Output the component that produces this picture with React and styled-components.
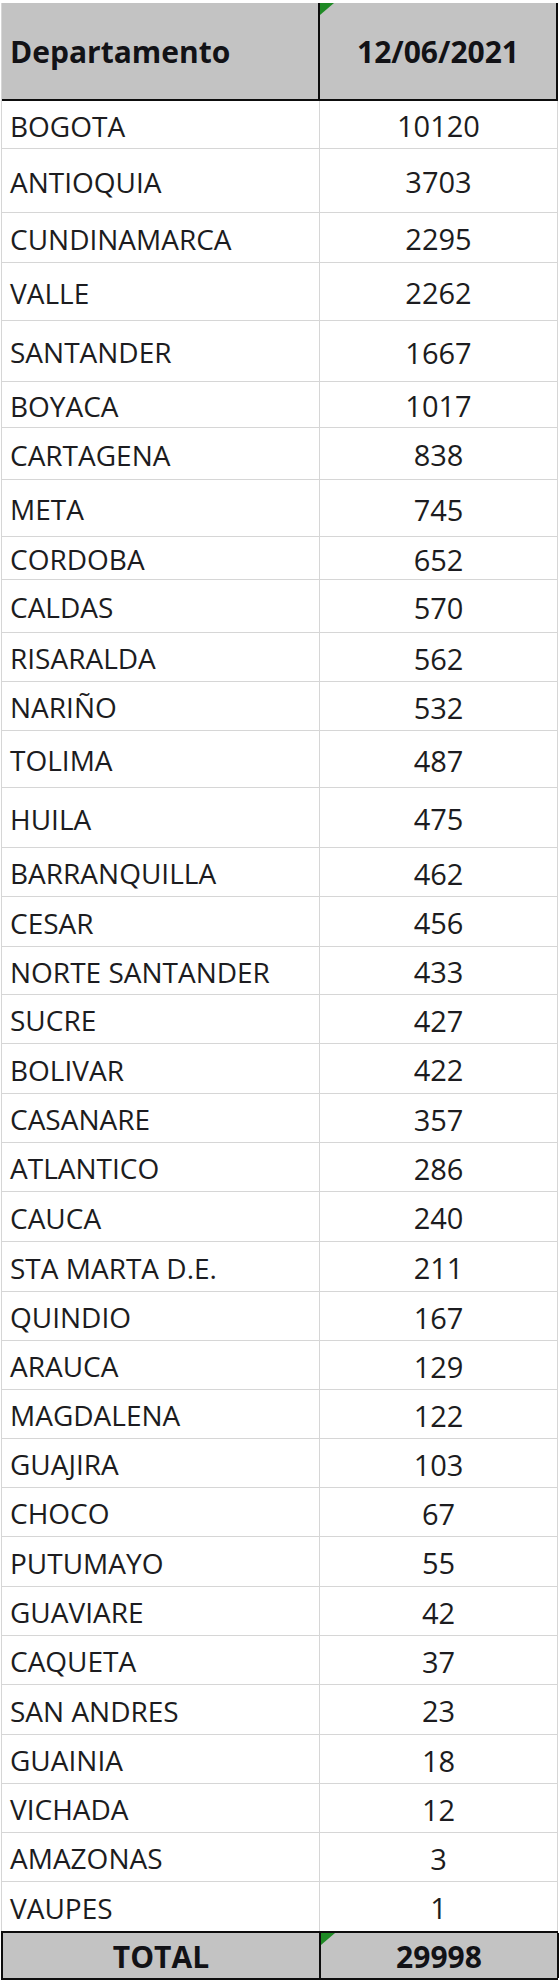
import React from "react";
import styled, { createGlobalStyle } from "styled-components";

const GlobalStyle = createGlobalStyle`
  html, body { margin: 0; padding: 0; background: #ffffff; }
  body { font-family: "Open Sans", "Liberation Sans", sans-serif; }
`;

const Page = styled.div`
  padding: 3px 0 0 1px;
  width: 560px;
  box-sizing: border-box;
`;

const Sheet = styled.div`
  width: 557px;
  display: flex;
  flex-direction: column;
  border-left: 1px solid #d6d6d6;
  box-sizing: border-box;
`;

const Row = styled.div`
  display: grid;
  grid-template-columns: 318px 238px;
  box-sizing: border-box;
  background: ${(p) => (p.$shaded ? "#c3c3c3" : "#ffffff")};
  border-bottom: ${(p) => (p.$strong ? "2px solid #0d0d0d" : "1px solid #d6d6d6")};
  border-top: ${(p) => (p.$topStrong ? "2px solid #0d0d0d" : "none")};
  margin-left: ${(p) => (p.$boxed ? "-1px" : "0")};
  border-left: ${(p) => (p.$boxed ? "2px solid #0d0d0d" : "none")};
`;

const Cell = styled.div`
  position: relative;
  display: flex;
  align-items: center;
  justify-content: ${(p) => (p.$align === "center" ? "center" : "flex-start")};
  padding: ${(p) => (p.$align === "center" ? "2px 0 0 0" : "2px 0 0 8px")};
  box-sizing: border-box;
  border-right: ${(p) => (p.$strong ? "2px solid #0d0d0d" : "1px solid #d6d6d6")};
  font-size: ${(p) => (p.$bold ? "30px" : p.$align === "center" ? "29px" : "28px")};
  font-weight: ${(p) => (p.$bold ? 700 : 400)};
  color: ${(p) => (p.$bold ? "#121216" : "#1c1c20")};
  white-space: nowrap;
  line-height: 1;
`;

const Flag = styled.span`
  position: absolute;
  top: 0;
  left: 0;
  width: 0;
  height: 0;
  border-top: 12px solid #1f8a25;
  border-right: 14px solid transparent;
`;

const data = [
  ["BOGOTA", "10120", 48],
  ["ANTIOQUIA", "3703", 64],
  ["CUNDINAMARCA", "2295", 50],
  ["VALLE", "2262", 58],
  ["SANTANDER", "1667", 61],
  ["BOYACA", "1017", 46],
  ["CARTAGENA", "838", 52],
  ["META", "745", 57],
  ["CORDOBA", "652", 43],
  ["CALDAS", "570", 53],
  ["RISARALDA", "562", 49],
  ["NARIÑO", "532", 49],
  ["TOLIMA", "487", 57],
  ["HUILA", "475", 60],
  ["BARRANQUILLA", "462", 49],
  ["CESAR", "456", 50],
  ["NORTE SANTANDER", "433", 48],
  ["SUCRE", "427", 49],
  ["BOLIVAR", "422", 50],
  ["CASANARE", "357", 49],
  ["ATLANTICO", "286", 49],
  ["CAUCA", "240", 50],
  ["STA MARTA D.E.", "211", 50],
  ["QUINDIO", "167", 49],
  ["ARAUCA", "129", 49],
  ["MAGDALENA", "122", 49],
  ["GUAJIRA", "103", 49],
  ["CHOCO", "67", 49],
  ["PUTUMAYO", "55", 50],
  ["GUAVIARE", "42", 49],
  ["CAQUETA", "37", 49],
  ["SAN ANDRES", "23", 50],
  ["GUAINIA", "18", 49],
  ["VICHADA", "12", 49],
  ["AMAZONAS", "3", 49],
  ["VAUPES", "1", 50],
];

export default function App() {
  return (
    <>
      <GlobalStyle />
      <Page>
        <Sheet>
          <Row $shaded $strong style={{ height: 98 }}>
            <Cell $bold $strong>Departamento</Cell>
            <Cell $bold $strong $align="center">
              <Flag />
              12/06/2021
            </Cell>
          </Row>
          {data.map(([name, value, h]) => (
            <Row key={name} style={{ height: h }}>
              <Cell>{name}</Cell>
              <Cell $align="center">{value}</Cell>
            </Row>
          ))}
          <Row $shaded $strong $topStrong $boxed style={{ height: 49, marginTop: -1 }}>
            <Cell $bold $strong $align="center">TOTAL</Cell>
            <Cell $bold $strong $align="center">
              <Flag />
              29998
            </Cell>
          </Row>
        </Sheet>
      </Page>
    </>
  );
}
